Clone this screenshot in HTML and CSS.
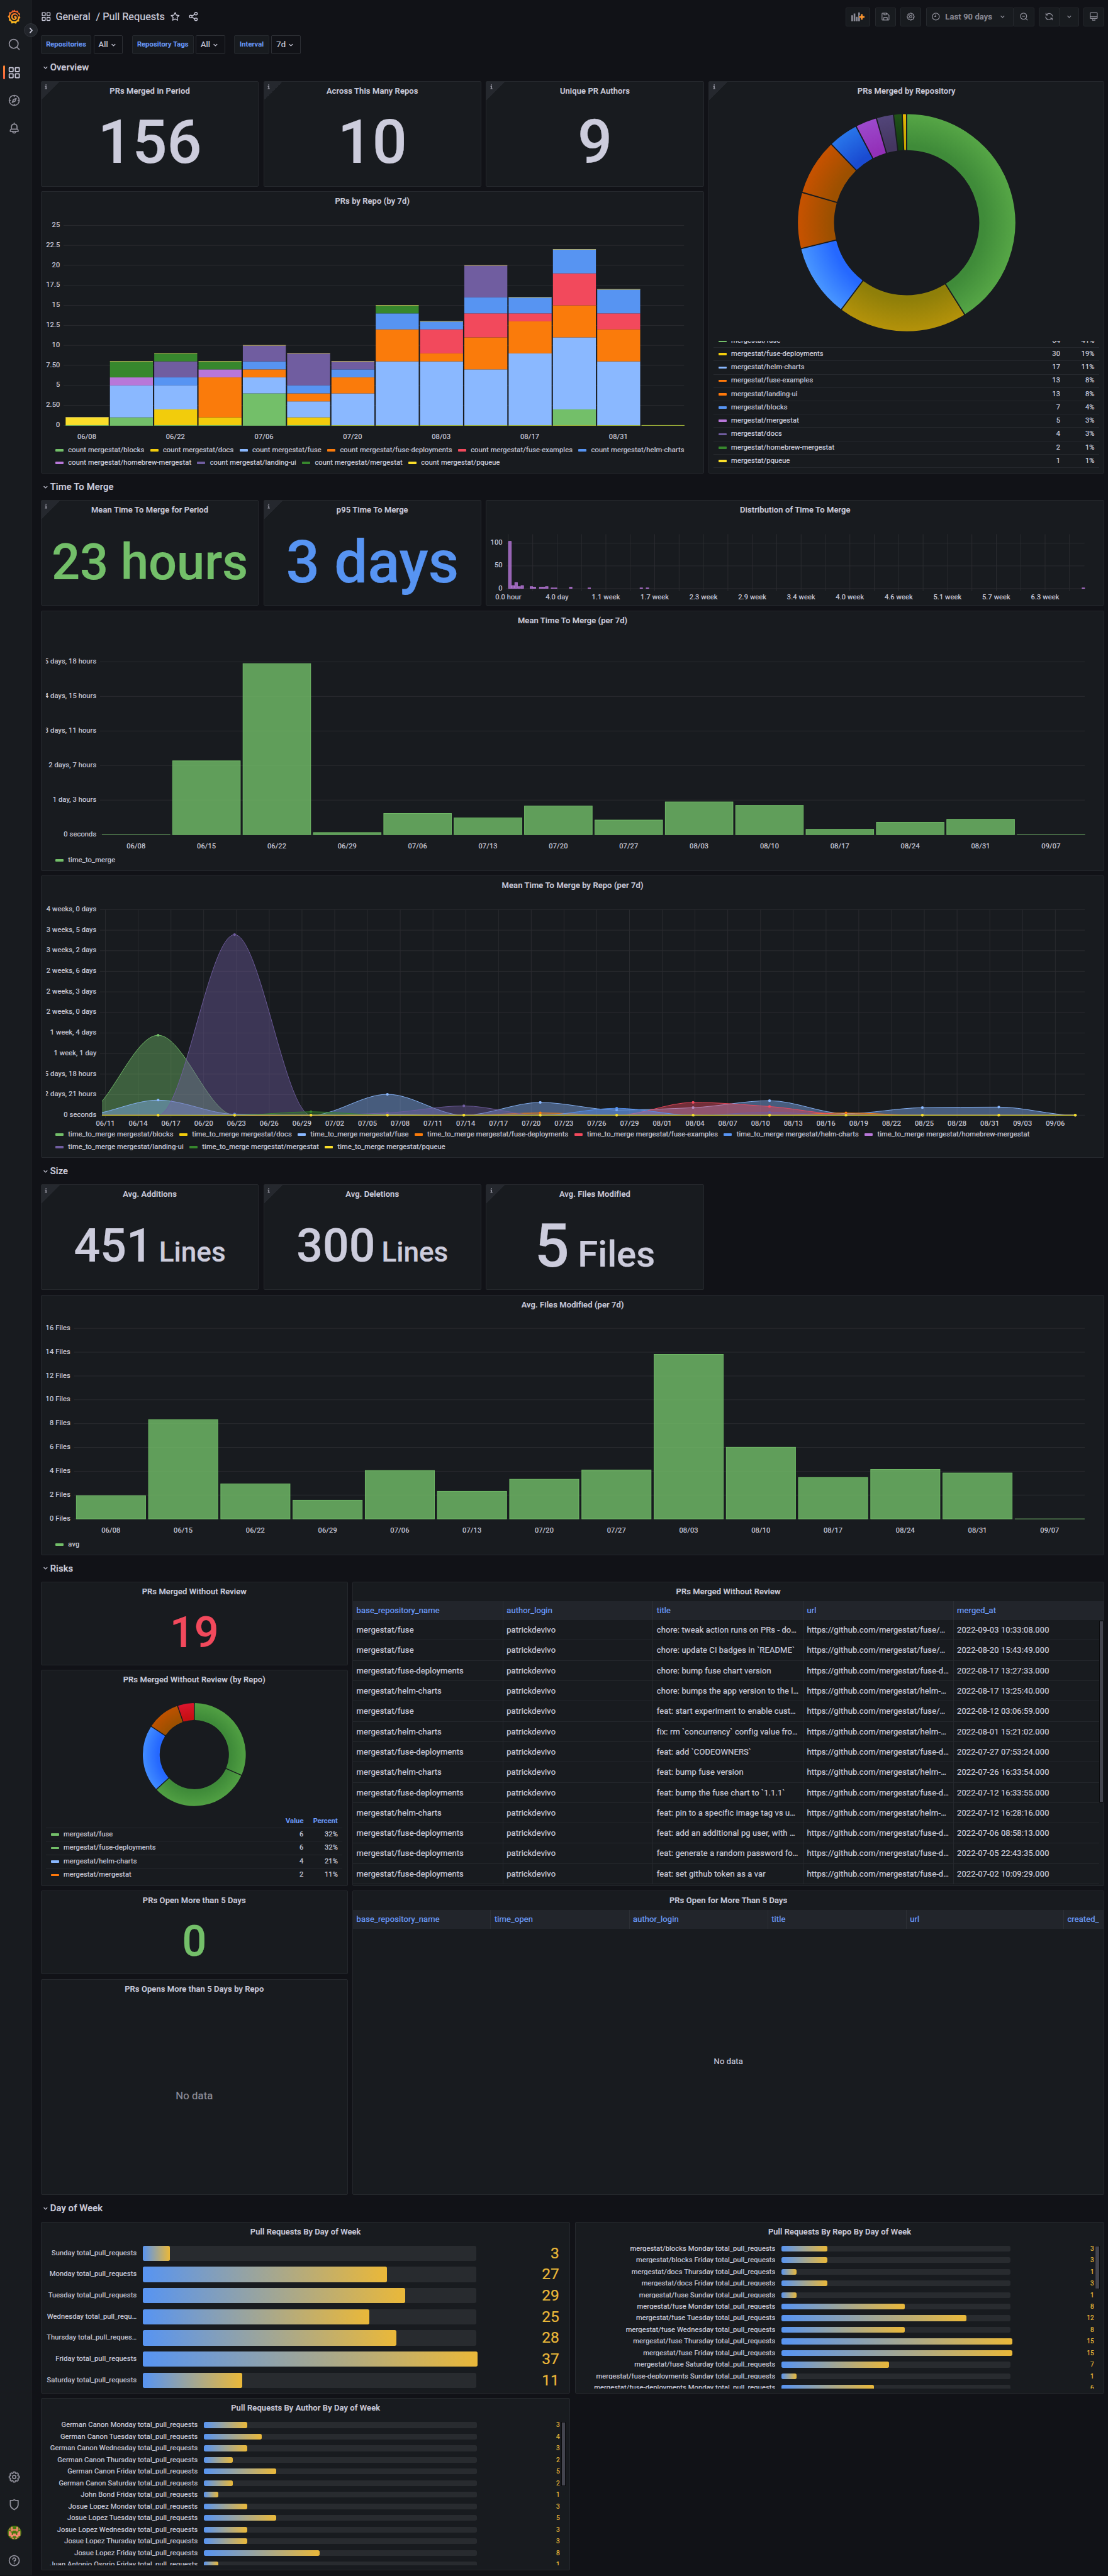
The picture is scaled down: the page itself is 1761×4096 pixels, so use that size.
FILE: index.html
```html
<!DOCTYPE html>
<html lang="en">
<head>
<meta charset="utf-8">
<title>Pull Requests - Grafana</title>
<link rel="stylesheet" href="styles.css">
</head>
<body>
<svg class="sprite" aria-hidden="true">
  <defs>
    <linearGradient id="logoGrad" x1="0" y1="0" x2="0" y2="1"><stop offset="0" stop-color="#f0522b"/><stop offset="1" stop-color="#fbc51d"/></linearGradient>
    <symbol id="i-apps" viewBox="0 0 24 24"><g fill="none" stroke="currentColor" stroke-width="2"><rect x="3" y="3" width="7" height="7" rx=".6"/><rect x="14" y="3" width="7" height="7" rx=".6"/><rect x="3" y="14" width="7" height="7" rx=".6"/><rect x="14" y="14" width="7" height="7" rx=".6"/></g></symbol>
    <symbol id="i-search" viewBox="0 0 24 24"><g fill="none" stroke="currentColor" stroke-width="2" stroke-linecap="round"><circle cx="11" cy="11" r="8"/><path d="M17 17l4 4"/></g></symbol>
    <symbol id="i-compass" viewBox="0 0 24 24"><path fill="currentColor" d="M12,2A10,10,0,1,0,22,12,10,10,0,0,0,12,2Zm1,17.93V19a1,1,0,0,0-2,0v.93A8,8,0,0,1,4.07,13H5a1,1,0,0,0,0-2H4.07A8,8,0,0,1,11,4.07V5a1,1,0,0,0,2,0V4.07A8,8,0,0,1,19.93,11H19a1,1,0,0,0,0,2h.93A8,8,0,0,1,13,19.93ZM15.14,7.55l-5,2.12a1,1,0,0,0-.52.52l-2.12,5a1,1,0,0,0,.21,1.1,1,1,0,0,0,.7.29.93.93,0,0,0,.4-.08l5-2.12a1,1,0,0,0,.52-.52l2.12-5a1,1,0,0,0-1.31-1.31Zm-2.49,5.1-2.28,1,1-2.28,2.28-1Z"/></symbol>
    <symbol id="i-bell" viewBox="0 0 24 24"><path fill="currentColor" d="M18,13.18V10a6,6,0,0,0-5-5.91V3a1,1,0,0,0-2,0V4.09A6,6,0,0,0,6,10v3.18A3,3,0,0,0,4,16v2a1,1,0,0,0,1,1H8.14a4,4,0,0,0,7.72,0H19a1,1,0,0,0,1-1V16A3,3,0,0,0,18,13.18ZM8,10a4,4,0,0,1,8,0v3H8Zm4,10a2,2,0,0,1-1.72-1h3.44A2,2,0,0,1,12,20Zm6-3H6V16a1,1,0,0,1,1-1H17a1,1,0,0,1,1,1Z"/></symbol>
    <symbol id="i-cog" viewBox="0 0 24 24"><path fill="currentColor" d="M21.32,9.55l-1.89-.63.89-1.78A1,1,0,0,0,20.13,6L18,3.87a1,1,0,0,0-1.15-.19l-1.78.89-.63-1.89A1,1,0,0,0,13.5,2h-3a1,1,0,0,0-.95.68L8.92,4.57,7.14,3.68A1,1,0,0,0,6,3.87L3.87,6a1,1,0,0,0-.19,1.15l.89,1.78-1.89.63A1,1,0,0,0,2,10.5v3a1,1,0,0,0,.68.95l1.89.63-.89,1.78A1,1,0,0,0,3.87,18L6,20.13a1,1,0,0,0,1.15.19l1.78-.89.63,1.89a1,1,0,0,0,.95.68h3a1,1,0,0,0,.95-.68l.63-1.89,1.78.89A1,1,0,0,0,18,20.13L20.13,18a1,1,0,0,0,.19-1.15l-.89-1.78,1.89-.63A1,1,0,0,0,22,13.5v-3A1,1,0,0,0,21.32,9.55ZM20,12.78l-1.2.4A2,2,0,0,0,17.64,16l.57,1.14-1.1,1.1L16,17.64a2,2,0,0,0-2.79,1.16l-.4,1.2H11.22l-.4-1.2A2,2,0,0,0,8,17.64l-1.14.57-1.1-1.1L6.36,16A2,2,0,0,0,5.2,13.18L4,12.78V11.22l1.2-.4A2,2,0,0,0,6.36,8L5.79,6.89l1.1-1.1L8,6.36A2,2,0,0,0,10.82,5.2l.4-1.2h1.56l.4,1.2A2,2,0,0,0,16,6.36l1.14-.57,1.1,1.1L17.64,8a2,2,0,0,0,1.16,2.79l1.2.4ZM12,8a4,4,0,1,0,4,4A4,4,0,0,0,12,8Zm0,6a2,2,0,1,1,2-2A2,2,0,0,1,12,14Z"/></symbol>
    <symbol id="i-shield" viewBox="0 0 24 24"><path fill="currentColor" d="M19.63,3.65a1,1,0,0,0-.84-.2,8,8,0,0,1-6.22-1.27,1,1,0,0,0-1.14,0A8,8,0,0,1,5.21,3.45a1,1,0,0,0-.84.2A1,1,0,0,0,4,4.43v7.45a9,9,0,0,0,3.77,7.33l3.65,2.6a1,1,0,0,0,1.16,0l3.65-2.6A9,9,0,0,0,20,11.88V4.43A1,1,0,0,0,19.63,3.65ZM18,11.88a7,7,0,0,1-2.93,5.7L12,19.77,8.93,17.58A7,7,0,0,1,6,11.88V5.58a10,10,0,0,0,6-1.39,10,10,0,0,0,6,1.39Z"/></symbol>
    <symbol id="i-help" viewBox="0 0 24 24"><g fill="none" stroke="currentColor" stroke-width="2" stroke-linecap="round"><circle cx="12" cy="12" r="9"/><path d="M9.4 9.6A2.6 2.6 0 1 1 12 12.2v1"/></g><circle cx="12" cy="16.5" r="1.2" fill="currentColor"/></symbol>
    <symbol id="i-star" viewBox="0 0 24 24"><path fill="none" stroke="currentColor" stroke-width="2" stroke-linejoin="round" d="M12 2.8l2.8 5.9 6.3.9-4.6 4.5 1.1 6.5-5.6-3.1-5.6 3.1 1.1-6.5L2.9 9.6l6.3-.9z"/></symbol>
    <symbol id="i-share" viewBox="0 0 24 24"><g fill="none" stroke="currentColor" stroke-width="2"><circle cx="18" cy="5.5" r="3"/><circle cx="6" cy="12" r="3"/><circle cx="18" cy="18.5" r="3"/><path d="M8.7 10.6l6.6-3.7M8.7 13.4l6.6 3.7"/></g></symbol>
    <symbol id="i-save" viewBox="0 0 24 24"><path fill="none" stroke="currentColor" stroke-width="2" stroke-linejoin="round" d="M3 5a2 2 0 0 1 2-2h10l6 6v10a2 2 0 0 1-2 2H5a2 2 0 0 1-2-2zM8 3v4.500h6V3M7.500 21v-6a1 1 0 0 1 1-1h7a1 1 0 0 1 1 1v6"/></symbol>
    <symbol id="i-clock" viewBox="0 0 24 24"><g fill="none" stroke="currentColor" stroke-width="2" stroke-linecap="round"><circle cx="12" cy="12" r="9"/><path d="M12 7v5H9"/></g></symbol>
    <symbol id="i-zoom-out" viewBox="0 0 24 24"><g fill="none" stroke="currentColor" stroke-width="2" stroke-linecap="round"><circle cx="11" cy="11" r="8"/><path d="M17 17l4 4M8 11h6"/></g></symbol>
    <symbol id="i-sync" viewBox="0 0 24 24"><path fill="none" stroke="currentColor" stroke-width="2" stroke-linecap="round" stroke-linejoin="round" d="M4 3.500V8h4.500M4.600 8A9 9 0 0 1 20.900 11M20 20.500V16h-4.500M19.400 16A9 9 0 0 1 3.100 13"/></symbol>
    <symbol id="i-monitor" viewBox="0 0 24 24"><path fill="none" stroke="currentColor" stroke-width="2" stroke-linejoin="round" d="M4.500 2h15A1.500 1.500 0 0 1 21 3.500v12a1.500 1.500 0 0 1-1.500 1.500h-15A1.500 1.500 0 0 1 3 15.500v-12A1.500 1.500 0 0 1 4.500 2zM3 12.500h18M9 17v2.500M15 17v2.500M8 21.500h8"/></symbol>
    <symbol id="i-down" viewBox="0 0 24 24"><path fill="none" stroke="currentColor" stroke-width="2" stroke-linecap="round" stroke-linejoin="round" d="M8 10.500l4 4 4-4"/></symbol>
    <symbol id="i-right" viewBox="0 0 24 24"><path fill="none" stroke="currentColor" stroke-width="3" stroke-linecap="round" stroke-linejoin="round" d="M9.500 6.500l5 5.500-5 5.500"/></symbol>
    <symbol id="i-info" viewBox="0 0 6 10"><path fill="currentColor" d="M1.800 0h2v2h-2zM.6 3.200h3.200v4.900h1.200v1.200H.6V8.100h1.200V4.400H.6z"/></symbol>
    <symbol id="i-logo" viewBox="0 0 22 24">
      <path fill="url(#logoGrad)" d="M11 .3l2.200 2.200 4-.7.700 3.400 3 2-1.300 2.900 1.700 3.600-2.400 2.200.3 3.900-3.600.8-1.700 3-3.400-1.200-3.900 1-1.200-3.300L1.900 18l.5-3.500L.3 11.600l2.300-2.700-.3-4.100 3.700-.4L8 1.200l2 .7z"/>
      <path fill="none" stroke="#181b1f" stroke-width="2" stroke-linecap="round" d="M18.300 10.800C17.400 6.900 14.400 5 11.200 5.200 7.300 5.500 4.600 8.600 4.900 12.600c.3 3.700 3.300 6.300 6.600 6 3-.2 5-2.600 4.700-5.300-.2-2.300-2-3.900-4-3.700-1.800.1-3 1.500-2.700 3.100.2 1.100 1 1.800 2 1.700"/>
    </symbol>
  </defs>
</svg>

<div class="app">
  <nav class="side">
    <svg class="logo"><use href="#i-logo"/></svg>
    <div class="side-top">
      <span class="side-item"><svg class="ic20"><use href="#i-search"/></svg></span>
      <span class="side-item active"><svg class="ic20"><use href="#i-apps"/></svg></span>
      <span class="side-item"><svg class="ic20"><use href="#i-compass"/></svg></span>
      <span class="side-item"><svg class="ic20"><use href="#i-bell"/></svg></span>
    </div>
    <div class="side-bottom">
      <span class="side-item"><svg class="ic20"><use href="#i-cog"/></svg></span>
      <span class="side-item"><svg class="ic20"><use href="#i-shield"/></svg></span>
      <span class="side-item"><svg class="avatar" viewBox="0 0 12 12"><path fill="#f58a70" d="M3 1h1.400v2h3.200V1H9v4H7.600V4.200H4.400V5H3zM1 4.600h1.600v1.200h1V8h1.200V6.800h2.400V8h1.200V5.800h1V4.600H11v4.200H9.400v1.400H7.400V9H4.600v1.200H2.600V8.800H1zM4 10.500h1.300v1H4zM6.700 10.500H8v1H6.700zM1.500 2.500h1v1h-1zM9.500 2.500h1v1h-1z"/></svg></span>
      <span class="side-item"><svg class="ic20"><use href="#i-help"/></svg></span>
    </div>
    <span class="side-toggle"><svg class="ic16"><use href="#i-right"/></svg></span>
  </nav>

  <main class="main">
    <header class="toolbar">
      <svg class="ic18"><use href="#i-apps"/></svg>
      <span class="crumb">General</span><span class="crumb crumb-page">/ Pull Requests</span>
      <svg class="ic18 t-star"><use href="#i-star"/></svg>
      <svg class="ic18 t-share"><use href="#i-share"/></svg>
      <div class="actions">
        <span class="btn btn-add"><svg class="add-panel" viewBox="0 0 26 18"><path fill="currentColor" d="M1 6h3v11H1zM5.200 3h3v14h-3zM9.400 9h3v8h-3zM13.600 5.500V1h3v4.500l-2 2v3h2V17h-3z"/><path fill="#ff9830" d="M18.500 4h3v3.500H25v3h-3.500V14h-3v-3.500H15v-3h3.500z"/></svg></span>
        <span class="btn"><svg class="ic16"><use href="#i-save"/></svg></span>
        <span class="btn"><svg class="ic16"><use href="#i-cog"/></svg></span>
        <span class="btn-group">
          <span class="btn btn-time"><svg class="ic16"><use href="#i-clock"/></svg><b>Last 90 days</b><svg class="ic16"><use href="#i-down"/></svg></span>
          <span class="btn"><svg class="ic16"><use href="#i-zoom-out"/></svg></span>
        </span>
        <span class="btn-group">
          <span class="btn"><svg class="ic16"><use href="#i-sync"/></svg></span>
          <span class="btn btn-drop"><svg class="ic16"><use href="#i-down"/></svg></span>
        </span>
        <span class="btn"><svg class="ic16"><use href="#i-monitor"/></svg></span>
      </div>
    </header>

    <div class="vars">
      <div class="var"><span class="var-label">Repositories</span><span class="var-value">All<svg class="ic16"><use href="#i-down"/></svg></span></div>
      <div class="var"><span class="var-label var-tags">Repository Tags</span><span class="var-value">All<svg class="ic16"><use href="#i-down"/></svg></span></div>
      <div class="var"><span class="var-label var-interval">Interval</span><span class="var-value">7d<svg class="ic16"><use href="#i-down"/></svg></span></div>
    </div>

    <div class="grid">
      <h2 class="row-title"><svg class="ic16"><use href="#i-down"/></svg>Overview</h2>
      <section class="panel w5 h5 info"><h3>PRs Merged in Period</h3><div class="stat s-xl">156</div></section>
      <section class="panel w5 h5 info"><h3>Across This Many Repos</h3><div class="stat s-xl">10</div></section>
      <section class="panel w5 h5 info"><h3>Unique PR Authors</h3><div class="stat s-xl">9</div></section>
      <section class="panel w9 h18 info"><h3>PRs Merged by Repository</h3><div class="pie" id="pie-repo"></div></section>
      <section class="panel w15 h13"><h3>PRs by Repo (by 7d)</h3><div class="chart" id="prs-by-repo"></div></section>

      <h2 class="row-title"><svg class="ic16"><use href="#i-down"/></svg>Time To Merge</h2>
      <section class="panel w5 h5 info"><h3>Mean Time To Merge for Period</h3><div class="stat s-l green">23 hours</div></section>
      <section class="panel w5 h5 info"><h3>p95 Time To Merge</h3><div class="stat s-days blue">3 days</div></section>
      <section class="panel w14 h5"><h3>Distribution of Time To Merge</h3><div class="chart" id="distribution"></div></section>
      <section class="panel w24 h12"><h3>Mean Time To Merge (per 7d)</h3><div class="chart" id="mean-ttm"></div></section>
      <section class="panel w24 h13"><h3>Mean Time To Merge by Repo (per 7d)</h3><div class="chart" id="ttm-by-repo"></div></section>

      <h2 class="row-title"><svg class="ic16"><use href="#i-down"/></svg>Size</h2>
      <section class="panel w5 h5 info"><h3>Avg. Additions</h3><div class="stat s-m"><span>451</span><small>Lines</small></div></section>
      <section class="panel w5 h5 info"><h3>Avg. Deletions</h3><div class="stat s-m"><span>300</span><small>Lines</small></div></section>
      <section class="panel w5 h5 info"><h3>Avg. Files Modified</h3><div class="stat s-xl"><span>5</span><small>Files</small></div></section>
      <section class="panel w24 h12"><h3>Avg. Files Modified (per 7d)</h3><div class="chart" id="avg-files"></div></section>

      <h2 class="row-title"><svg class="ic16"><use href="#i-down"/></svg>Risks</h2>
      <section class="panel w7 h4"><h3>PRs Merged Without Review</h3><div class="stat s-s red">19</div></section>
      <section class="panel w17 h14"><h3>PRs Merged Without Review</h3><div class="table" id="no-review"></div><i class="scroll scroll-table"></i></section>
      <section class="panel w7 h10"><h3>PRs Merged Without Review (by Repo)</h3><div class="pie" id="pie-review"></div></section>
      <section class="panel w7 h4"><h3>PRs Open More than 5 Days</h3><div class="stat s-s green">0</div></section>
      <section class="panel w17 h14"><h3>PRs Open for More Than 5 Days</h3>
        <div class="table"><div class="tr th open-cols"><span>base_repository_name</span><span>time_open</span><span>author_login</span><span>title</span><span>url</span><span>created_</span></div></div>
        <div class="empty">No data</div>
      </section>
      <section class="panel w7 h10"><h3>PRs Opens More than 5 Days by Repo</h3><div class="empty empty-lg">No data</div></section>

      <h2 class="row-title"><svg class="ic16"><use href="#i-down"/></svg>Day of Week</h2>
      <section class="panel w12 h8"><h3>Pull Requests By Day of Week</h3><div class="gauges gauges-lg" id="g-day"></div></section>
      <section class="panel w12 h8"><h3>Pull Requests By Repo By Day of Week</h3><div class="gauges gauges-repo" id="g-repo"></div><i class="scroll scroll-repo"></i></section>
      <section class="panel w12 h8"><h3>Pull Requests By Author By Day of Week</h3><div class="gauges gauges-author" id="g-author"></div><i class="scroll scroll-author"></i></section>
    </div>
  </main>
</div>
<script src="script.js"></script>
</body>
</html>
```
FILE: styles.css
```css
*, *::before, *::after { box-sizing: border-box; }
html { background: #111217; }
body {
  margin: 0;
  background: #111217;
  color: #ccccdc;
  font: 400 14px/22px Roboto, "Liberation Sans", sans-serif;
  letter-spacing: 0.01071em;
  -webkit-text-stroke: 0.25px;
  overflow-x: hidden;
}
h2, h3 { margin: 0; }
.sprite { position: absolute; width: 0; height: 0; }
.ic16, .ic18, .ic20 { display: block; flex: none; width: 16px; height: 16px; }
.ic18 { width: 18px; height: 18px; }
.ic20 { width: 23px; height: 23px; }

.app { display: flex; width: 1907px; height: 4435px; zoom: 0.92344; }

/* sidebar */
.side {
  position: relative;
  flex: none;
  display: flex;
  flex-direction: column;
  width: 54px;
  padding: 16px 0 2px;
  background: #181b1f;
  border-right: 1px solid #25272c;
}
.logo { width: 23px; height: 25px; margin-left: 13.500px; }
.side-top { margin-top: 12px; }
.side-bottom { margin-top: auto; }
.side-item {
  position: relative;
  display: flex;
  align-items: center;
  justify-content: center;
  width: 50px;
  height: 48px;
  color: #8e8e99;
}
.side-item.active { color: #ccccdc; }
.side-item.active::before {
  content: "";
  position: absolute;
  left: 5px;
  top: 12px;
  width: 4px;
  height: 24px;
  border-radius: 2px;
  background: linear-gradient(#ff8833, #f55f3e);
}
.avatar { width: 24px; height: 24px; border-radius: 50%; background: #477a0e; }
.side-toggle {
  position: absolute;
  z-index: 2;
  left: 41px;
  top: 40px;
  display: flex;
  align-items: center;
  justify-content: center;
  width: 24px;
  height: 24px;
  border-radius: 50%;
  background: #22252b;
  border: 1px solid #303339;
}

/* top bar */
.main { flex: 1; min-width: 0; padding: 13px 6.200px 10px 16.300px; }
.toolbar { display: flex; align-items: center; height: 32px; }
.crumb { margin-left: 7.500px; font-size: 17.600px; letter-spacing: 0; white-space: pre; }
.crumb-page { margin-left: 9.500px; }
.t-star { margin-left: 8.500px; }
.t-share { margin-left: 14px; }
.actions { display: flex; gap: 8px; margin-left: auto; color: #8e8e99; }
.btn {
  display: flex;
  align-items: center;
  justify-content: center;
  width: 36px;
  height: 32px;
  background: #181b1f;
  border: 1px solid #25282d;
  border-radius: 2px;
}
.btn-add { width: 42px; }
.add-panel { width: 25px; height: 17px; }
.btn-group { display: flex; }
.btn-group .btn + .btn { margin-left: -1px; }
.btn-time { width: 151px; justify-content: flex-start; padding: 0 8px; }
.btn-time b { margin: 0 10px 0 8px; font-weight: 500; }
.btn-group .btn-drop { width: 34px; }

.vars { display: flex; gap: 16px; margin-top: 16px; }
.var { display: flex; gap: 3.800px; }
.var-label, .var-value {
  display: flex;
  align-items: center;
  justify-content: center;
  height: 32px;
  border: 1px solid #25282d;
  border-radius: 2px;
}
.var-label { width: 87px; background: #181b1f; color: #6e9fff; font-size: 12px; font-weight: 500; }
.var-tags { width: 105.700px; }
.var-interval { width: 60px; }
.var-value { width: 50.400px; border-color: #2c2e34; }
.var-value svg { margin-left: 1px; }

/* dashboard grid */
.grid {
  display: grid;
  grid-template-columns: repeat(24, minmax(0, 1fr));
  grid-auto-rows: 30px;
  gap: 8.004px 8px;
  margin-top: 8.300px;
}
.row-title {
  grid-column: 1 / -1;
  display: flex;
  align-items: center;
  font-size: 16px;
  font-weight: 500;
}
.panel {
  position: relative;
  display: flex;
  flex-direction: column;
  min-height: 0;
  background: #181b1f;
  border: 1px solid #25282d;
  border-radius: 2px;
  overflow: hidden;
}
.panel h3 {
  flex: none;
  height: 32px;
  padding-top: 1px;
  line-height: 31px;
  font-size: 14px;
  font-weight: 500;
  text-align: center;
}
.w5 { grid-column: span 5; }
.w7 { grid-column: span 7; }
.w9 { grid-column: span 9; }
.w12 { grid-column: span 12; }
.w14 { grid-column: span 14; }
.w15 { grid-column: span 15; }
.w17 { grid-column: span 17; }
.w24 { grid-column: span 24; }
.h4 { grid-row: span 4; }
.h5 { grid-row: span 5; }
.h8 { grid-row: span 8; }
.h10 { grid-row: span 10; }
.h12 { grid-row: span 12; }
.h13 { grid-row: span 13; }
.h14 { grid-row: span 14; }
.h18 { grid-row: span 18; }
.corner {
  position: absolute;
  left: 0;
  top: 0;
  width: 32px;
  height: 32px;
  background: linear-gradient(135deg, #25282e 50%, transparent 50%);
  color: #9a9aa6;
}
.corner svg { display: block; width: 5px; height: 9px; margin: 5px 0 0 6px; }

.stat {
  flex: 1;
  display: flex;
  align-items: center;
  justify-content: center;
  padding-bottom: 1px;
  font-weight: 500;
  line-height: 1;
  letter-spacing: 0;
  white-space: nowrap;
}
.stat:has(small) { align-items: baseline; }
.stat small { font-size: 0.6em; margin-left: 0.23em; }
.s-xl { font-size: 105px; }
.s-days { font-size: 102px; }
.s-l { font-size: 86px; }
.s-m { font-size: 79.500px; }
.s-s { font-size: 74px; }
.s-m:has(small) { padding-top: 34px; }
.s-xl:has(small) { padding-top: 21px; }
.green { color: #73bf69; }
.blue { color: #5794f2; }
.red { color: #f2495c; }

/* charts */
.chart svg, .pie svg { display: block; width: 100%; }
.ax { fill: #ccccdc; stroke: #ccccdc; stroke-width: 0.25px; font-size: 12px; }
.gl { stroke: #2b2d31; stroke-width: 1; }
.legend { display: flex; flex-wrap: wrap; column-gap: 10px; padding: 0 24px; font-size: 12px; }
.legend span { display: flex; align-items: center; gap: 8px; height: 22px; white-space: nowrap; }
.swatch { flex: none; width: 14px; height: 4px; border-radius: 1px; }

.pie { flex: 1; display: flex; flex-direction: column; min-height: 0; }
.pie svg { flex: none; }
.pie-legend { display: flex; flex-direction: column; justify-content: flex-end; margin: 0 8px; overflow: hidden; font-size: 12px; }
.lr { flex: none; display: flex; align-items: center; height: 23px; padding: 0 8px; border-bottom: 1px solid #25282d; }
.lr .name { flex: 1; margin-left: 8px; }
.lr .pct { width: 59px; text-align: right; }
.lr.head { color: #6e9fff; font-weight: 500; }
#pie-repo .pie-legend { height: 219px; }
#pie-review .pie-legend { height: 115px; }
#pie-review .lr:last-child { border-bottom: 0; }

/* tables */
.tr { display: grid; grid-template-columns: repeat(4, 258.400px) 1fr; height: 35px; border-bottom: 1px solid #25282d; margin-right: 8px; }
.tr span { padding-left: 6px; line-height: 34px; border-right: 1px solid #25282d; white-space: nowrap; overflow: hidden; }
.tr span:last-child { border-right: 0; }
.tr.th { height: 33px; margin-right: 0; border-bottom: 0; background: #22252b; color: #6e9fff; }
.th span { line-height: 33px; border-right-color: #2c2f35; }
.tr.open-cols { grid-template-columns: 237.500px repeat(3, 238.400px) 270.800px 1fr; }
.scroll {
  position: absolute;
  width: 8px;
  background: #43444e;
  border: 1px solid #0b0c0e;
}
.scroll-table { right: 0; top: 66px; height: 313px; }
.scroll-repo { right: 7px; top: 40px; height: 75px; }
.scroll-author { right: 7px; top: 40px; height: 110px; }
.empty { flex: 1; display: flex; align-items: center; justify-content: center; }
.empty-lg { font-size: 18px; color: #8e8e99; }

/* bar gauges */
.gauges { display: flex; flex-direction: column; margin-top: 8px; padding-left: 8px; overflow: hidden; }
.g-row { flex: none; display: flex; align-items: center; }
.g-label { flex: none; text-align: right; font-size: 12px; white-space: nowrap; overflow: hidden; margin-right: 10px; }
.g-track { flex: none; height: 100%; border-radius: 3px; background: #282b2f; }
.g-fill { height: 100%; border-radius: 3px; background: linear-gradient(90deg, #5794f2, #eab839); }
.g-value { flex: 1; text-align: right; color: #eab839; letter-spacing: 0; }
.gauges-lg { gap: 10.100px; padding-right: 18px; }
.gauges-lg .g-row { height: 26.400px; }
.gauges-lg .g-label { width: 156px; margin-right: 10.500px; }
.gauges-lg .g-track { width: 574px; }
.gauges-lg .g-value { font-size: 26.500px; }
.gauges-repo, .gauges-author { gap: 10.004px; height: 246px; padding-right: 17px; }
.gauges-repo .g-row, .gauges-author .g-row { height: 10px; }
.gauges-repo .g-label, .gauges-author .g-label { height: 10px; line-height: 10px; }
.gauges-repo .g-value, .gauges-author .g-value { font-size: 11px; line-height: 10px; }
.gauges-repo .g-label { width: 336px; }
.gauges-repo .g-track { width: 395px; }
.gauges-author .g-label { width: 261px; }
.gauges-author .g-track { width: 470px; }
```
FILE: script.js
```js
const $ = id => document.getElementById(id);
const C = {
  blocks: '#73BF69', docs: '#F2CC0C', fuse: '#8AB8FF', 'fuse-deployments': '#FA7B0B', 'fuse-examples': '#F2495C',
  'helm-charts': '#5794F2', 'homebrew-mergestat': '#B877D9', 'landing-ui': '#705DA0', mergestat: '#37872D', pqueue: '#FADE2A'
};
const REPOS = Object.keys(C);
const GREEN = '#73BF69';

const line = (x1, y1, x2, y2) => `<line class="gl" x1="${x1}" y1="${y1}" x2="${x2}" y2="${y2}"/>`;
const text = (x, y, s, anchor = 'middle') => `<text class="ax" x="${x}" y="${y + 4.3}" text-anchor="${anchor}">${s}</text>`;
const rect = (x, y, w, h, extra) => `<rect x="${x}" y="${y}" width="${w}" height="${h}" ${extra}/>`;
const legend = items => `<div class="legend">${items.map(([n, c]) => `<span><i class="swatch" style="background:${c}"></i>${n}</span>`).join('')}</div>`;
const svg = (w, h, body) => `<svg viewBox="1 33 ${w - 2} ${h}" height="${h}">${body}</svg>`;

// horizontal grid with labels to the left of the plot
function yGrid(labels, top, bottom, left, right) {
  const step = (bottom - top) / (labels.length - 1);
  return labels.map((l, i) => line(left, top + i * step, right, top + i * step) + text(left - 6, top + i * step - 1.4, l, 'end')).join('');
}

document.querySelectorAll('.panel.info').forEach(p =>
  p.insertAdjacentHTML('beforeend', '<i class="corner"><svg><use href="#i-info"/></svg></i>'));

// PRs by repo, stacked bars
(() => {
  const stacks = [
    { pqueue: 1 }, { blocks: 1, fuse: 4, 'homebrew-mergestat': 1, mergestat: 2 },
    { docs: 2, fuse: 3, 'helm-charts': 1, 'landing-ui': 2, mergestat: 1 },
    { docs: 1, 'fuse-deployments': 5, 'homebrew-mergestat': 1, mergestat: 1 },
    { blocks: 4, fuse: 2, 'fuse-deployments': 1, 'helm-charts': 1, 'landing-ui': 2 },
    { docs: 1, fuse: 2, 'fuse-deployments': 1, 'helm-charts': 1, 'landing-ui': 4 },
    { fuse: 4, 'fuse-deployments': 2, 'helm-charts': 1, 'landing-ui': 1 },
    { fuse: 8, 'fuse-deployments': 4, 'helm-charts': 2, mergestat: 1 },
    { fuse: 8, 'fuse-deployments': 1, 'fuse-examples': 3, 'helm-charts': 1 },
    { fuse: 7, 'fuse-deployments': 4, 'fuse-examples': 3, 'helm-charts': 2, 'landing-ui': 4 },
    { fuse: 9, 'fuse-deployments': 4, 'fuse-examples': 1, 'helm-charts': 2 },
    { blocks: 2, fuse: 9, 'fuse-deployments': 4, 'fuse-examples': 4, 'helm-charts': 3 },
    { fuse: 8, 'fuse-deployments': 4, 'fuse-examples': 2, 'helm-charts': 3 }, {}
  ];
  const top = 58.3, bottom = 402.7, unit = (bottom - top) / 25;
  let s = yGrid(['25', '22.5', '20', '17.5', '15', '12.5', '10', '7.50', '5', '2.50', '0'], top, bottom, 38.8, 1107);
  stacks.forEach((st, i) => {
    const x = 42.5 + i * 76.25;
    let n = 0;
    for (const r of REPOS) if (st[r]) {
      n += st[r];
      s += rect(x, bottom - n * unit, 74, st[r] * unit, `fill="${C[r]}"`);
    }
    if (n) s += rect(x, bottom - n * unit - .5, 74, 1, 'fill="#c3b45a"');
    s += rect(x, bottom - .5, 74, 1, `fill="${i < 6 ? '#73BF69' : '#b5cc3c'}"`);
  });
  ['06/08', '06/22', '07/06', '07/20', '08/03', '08/17', '08/31'].forEach((d, i) => { s += text(79 + i * 152.5, 421.9, d); });
  $('prs-by-repo').innerHTML = svg(1141, 402, s) + legend(REPOS.map(r => ['count mergestat/' + r, C[r]]));
})();

// distribution histogram
(() => {
  let s = '';
  for (let k = 0; k < 24; k++) s += line(38.8 + 42 * k, 58.3, 38.8 + 42 * k, 156.5);
  s += yGrid(['100', '50', '0'], 73.9, 152, 34.8, 1030.6);
  ['0.0 hour', '4.0 day', '1.1 week', '1.7 week', '2.3 week', '2.9 week', '3.4 week', '4.0 week', '4.6 week', '5.1 week', '5.7 week', '6.3 week']
    .forEach((l, i) => { s += text(38.8 + 84 * i, 165.9, l); });
  [[38.8, 81], [44.2, 4.8], [49.5, 10], [54.8, 3], [60.1, 4.8], [75.8, 3], [81, 2.2], [91.8, 2], [97, 2], [102.3, 3], [112, .8], [117.6, .8],
    [143.6, 2], [175.4, .8], [265, .8], [275.6, .8], [1026, .8]].forEach(([x, h]) => {
    s += rect(x + .5, 151.7 - h, 4.4, h, 'fill="#B877D9" fill-opacity=".8" stroke="#B877D9" stroke-width="1"');
  });
  $('distribution').innerHTML = svg(1064.5, 146, s);
})();

function weeklyBars(id, cfg) {
  const dates = ['06/08', '06/15', '06/22', '06/29', '07/06', '07/13', '07/20', '07/27', '08/03', '08/10', '08/17', '08/24', '08/31', '09/07'];
  let s = `<clipPath id="${id}-clip"><rect x="8.5" y="0" width="1900" height="500"/></clipPath>`;
  s += `<g clip-path="url(#${id}-clip)">` + yGrid(cfg.labels, cfg.top, 386.2, cfg.left, 1796.6) + '</g>';
  cfg.tops.forEach((y, i) => {
    const x = cfg.x0 + i * cfg.pitch, h = 386.2 - y;
    s += h > 0
      ? rect(x + .5, y + .5, cfg.w - 1, h - .5, `fill="${GREEN}" fill-opacity=".8" stroke="${GREEN}" stroke-width="1"`)
      : rect(x, 385.7, cfg.w, 1, `fill="${GREEN}"`);
    s += text(x + cfg.w / 2, 405.9, dates[i]);
  });
  $(id).innerHTML = svg(1830.5, 386, s) + legend([[cfg.name, GREEN]]);
}
weeklyBars('mean-ttm', {
  labels: ['5 days, 18 hours', '4 days, 15 hours', '3 days, 11 hours', '2 days, 7 hours', '1 day, 3 hours', '0 seconds'],
  top: 88.6, left: 101.6, x0: 105, pitch: 121.14, w: 117.5, name: 'time_to_merge',
  tops: [386.2, 258.6, 91.2, 382.2, 349.3, 356.7, 336.3, 360.6, 329.3, 335.4, 376.6, 364.5, 359.3, 386.2]
});
weeklyBars('avg-files', {
  labels: [16, 14, 12, 10, 8, 6, 4, 2, 0].map(n => n + ' Files'),
  top: 58.1, left: 56.8, x0: 60.4, pitch: 124.3, w: 120.2, name: 'avg',
  tops: [345.6, 214.7, 325.3, 353.5, 302.3, 338.3, 317.5, 301.4, 102.3, 262.4, 314.4, 300.5, 306.6, 386.2]
});

// mean time to merge by repo, smoothed areas
(() => {
  const base = 412.3, x = i => 201.7 + 131.55 * i;
  const vals = { // height above the baseline per weekly point
    blocks: { 0: 137.7, 3: 2 }, docs: {},
    fuse: { 0: 26, 1: 1.5, 3: 36, 5: 22, 6: 9, 7: 13, 8: 25, 9: 2.7, 10: 13, 11: 14 },
    'fuse-deployments': { 5: 4, 9: 4 }, 'fuse-examples': { 7: 22, 8: 15, 9: 1 },
    'helm-charts': { 1: 2, 6: 12 }, 'homebrew-mergestat': {},
    'landing-ui': { 1: 311, 3: 4, 4: 16, 8: 5 }, mergestat: { 2: 6 }, pqueue: {}
  };
  let s = '<clipPath id="repo-clip"><rect x="105" y="50" width="1700" height="370"/></clipPath><clipPath id="repo-y"><rect x="8.5" y="0" width="1900" height="500"/></clipPath>';
  for (let k = 0; k < 30; k++) s += line((111 + 56.38 * k).toFixed(1), 58.3, (111 + 56.38 * k).toFixed(1), 417);
  s += '<g clip-path="url(#repo-y)">' + yGrid(['4 weeks, 0 days', '3 weeks, 5 days', '3 weeks, 2 days', '2 weeks, 6 days', '2 weeks, 3 days', '2 weeks, 0 days', '1 week, 4 days', '1 week, 1 day', '5 days, 18 hours', '2 days, 21 hours', '0 seconds'], 58.3, base, 101.6, 1796.6) + '</g>';
  for (let k = 0; k < 30; k++) {
    const d = new Date(2022, 5, 11 + 3 * k), p = n => String(n).padStart(2, '0');
    s += text(111 + 56.38 * k, 425.7, p(d.getMonth() + 1) + '/' + p(d.getDate()));
  }
  for (const r of REPOS) {
    const pts = [];
    for (let i = -1; i <= 12; i++) pts.push([x(i), base - (vals[r][i] || 0)]);
    const m = pts.map((p, i) => {
      if (!i || i === pts.length - 1) return 0;
      const a = p[1] - pts[i - 1][1], b = pts[i + 1][1] - p[1];
      return a * b <= 0 ? 0 : 2 * a * b / (a + b) / 131.55;
    });
    let d = `M${pts[0]}`;
    for (let i = 1; i < pts.length; i++) {
      const k = 131.55 / 3;
      d += `C${pts[i - 1][0] + k},${pts[i - 1][1] + m[i - 1] * k} ${pts[i][0] - k},${pts[i][1] - m[i] * k} ${pts[i]}`;
    }
    s += `<g clip-path="url(#repo-clip)"><path d="${d}V${base}H${pts[0][0]}Z" fill="${C[r]}" fill-opacity=".42"/><path d="${d}" fill="none" stroke="${C[r]}" stroke-width="1"/></g>`;
    pts.slice(1).forEach(p => { s += `<circle cx="${p[0]}" cy="${p[1]}" r="2.3" fill="${C[r]}"/>`; });
  }
  $('ttm-by-repo').innerHTML = svg(1830.5, 402, s) + legend(REPOS.map(r => ['time_to_merge mergestat/' + r, C[r]]));
})();

function donut(id, cfg) {
  const total = cfg.rows.reduce((a, r) => a + r.v, 0);
  const { cx, cy, R, r } = cfg, d = cfg.inset;
  let a = 0, s = '';
  cfg.rows.forEach((row, i) => {
    const b = a + row.v / total * 2 * Math.PI;
    const pt = (ang, rad) => `${(cx + rad * Math.sin(ang)).toFixed(2)},${(cy - rad * Math.cos(ang)).toFixed(2)}`;
    const Ro = R - 1, ri = r + 1, o = Math.asin(d / Ro), n = Math.asin(d / ri), big = b - a > Math.PI ? 1 : 0;
    s += `<radialGradient id="${id}-${i}" gradientUnits="userSpaceOnUse" cx="${cx}" cy="${cy}" r="${cfg.gr}"><stop offset="${r * 1.06 / cfg.gr}" stop-color="${row.g[0]}"/><stop offset="1" stop-color="${row.g[1]}"/></radialGradient>`;
    s += `<path fill="url(#${id}-${i})" stroke="url(#${id}-${i})" stroke-width="2" stroke-linejoin="round" d="M${pt(a + o, Ro)}A${Ro},${Ro} 0 ${big} 1 ${pt(b - o, Ro)}L${pt(b - n, ri)}A${ri},${ri} 0 ${big} 0 ${pt(a + n, ri)}Z"/>`;
    a = b;
  });
  const head = cfg.head ? '<div class="lr head"><span class="name"></span><span>Value</span><span class="pct">Percent</span></div>' : '';
  const rows = cfg.rows.filter(row => row.name).map(row =>
    `<div class="lr"><i class="swatch" style="background:${row.c}"></i><span class="name">mergestat/${row.name}</span><span>${row.v}</span><span class="pct">${row.p}%</span></div>`).join('');
  $(id).innerHTML = svg(cfg.w, cfg.h, s) + `<div class="pie-legend">${head}${rows}</div>`;
}
const G = {
  green: ['#3f8b39', '#56a646'], gold: ['#8f7f09', '#b4920a'], blue: ['#2568ff', '#4996ff'], orange: ['#9d5000', '#c75200'],
  deep: ['#1a4bd1', '#2875ea'], purple: ['#9330b8', '#9c49cc'], plum: ['#44365f', '#52457a'], forest: ['#133a12', '#205318'],
  yellow: ['#c6a800', '#e3b505'], red: ['#c70f12', '#e01736']
};
donut('pie-repo', {
  w: 681.4, h: 414.5, cx: 341, cy: 244.2, R: 187, r: 125, gr: 187, inset: 2, rows: [
    { name: 'fuse', v: 64, p: 41, c: '#73BF69', g: G.green }, { name: 'fuse-deployments', v: 30, p: 19, c: '#F2CC0C', g: G.gold },
    { name: 'helm-charts', v: 17, p: 11, c: '#8AB8FF', g: G.blue }, { name: 'fuse-examples', v: 13, p: 8, c: '#FF780A', g: G.orange },
    { name: 'landing-ui', v: 13, p: 8, c: '#FF780A', g: G.orange }, { name: 'blocks', v: 7, p: 4, c: '#5794F2', g: G.deep },
    { name: 'mergestat', v: 5, p: 3, c: '#B877D9', g: G.purple }, { name: 'docs', v: 4, p: 3, c: '#705DA0', g: G.plum },
    { name: 'homebrew-mergestat', v: 2, p: 1, c: '#37872D', g: G.forest }, { name: 'pqueue', v: 1, p: 1, c: '#FADE2A', g: G.yellow }
  ]
});
donut('pie-review', {
  w: 528.2, h: 216.5, cx: 264, cy: 145.5, R: 88.6, r: 59.6, gr: 96, inset: 1.8, head: true, rows: [
    { name: 'fuse', v: 6, p: 32, c: '#73BF69', g: G.green }, { name: 'fuse-deployments', v: 6, p: 32, c: '#73BF69', g: G.green },
    { name: 'helm-charts', v: 4, p: 21, c: '#8AB8FF', g: G.blue }, { name: 'mergestat', v: 2, p: 11, c: '#FF780A', g: G.orange },
    { v: 1, g: G.red }
  ]
});

// PRs merged without review
(() => {
  const F = 'fuse', D = 'fuse-deployments', H = 'helm-charts';
  const url = { [F]: 'fuse/…', [D]: 'fuse-d…', [H]: 'helm-…' };
  const rows = [
    [F, 'chore: tweak action runs on PRs - do…', '2022-09-03 10:33:08.000'], [F, 'chore: update CI badges in `README`', '2022-08-20 15:43:49.000'],
    [D, 'chore: bump fuse chart version', '2022-08-17 13:27:33.000'], [H, 'chore: bumps the app version to the l…', '2022-08-17 13:25:40.000'],
    [F, 'feat: start experiment to enable cust…', '2022-08-12 03:06:59.000'], [H, 'fix: rm `concurrency` config value fro…', '2022-08-01 15:21:02.000'],
    [D, 'feat: add `CODEOWNERS`', '2022-07-27 07:53:24.000'], [H, 'feat: bump fuse version', '2022-07-26 16:33:54.000'],
    [D, 'feat: bump the fuse chart to `1.1.1`', '2022-07-12 16:33:55.000'], [H, 'feat: pin to a specific image tag vs u…', '2022-07-12 16:28:16.000'],
    [D, 'feat: add an additional pg user, with …', '2022-07-06 08:58:13.000'], [D, 'feat: generate a random password fo…', '2022-07-05 22:43:35.000'],
    [D, 'feat: set github token as a var', '2022-07-02 10:09:29.000']
  ];
  const tr = (cells, cls = '') => `<div class="tr ${cls}">${cells.map(c => `<span>${c}</span>`).join('')}</div>`;
  $('no-review').innerHTML = tr(['base_repository_name', 'author_login', 'title', 'url', 'merged_at'], 'th') +
    rows.map(([r, t, d]) => tr(['mergestat/' + r, 'patrickdevivo', t, 'https://github.com/mergestat/' + url[r], d])).join('');
})();

function gauges(id, rows, max, over) {
  $(id).innerHTML = rows.map(([l, v]) =>
    `<div class="g-row"><span class="g-label">${l}</span><div class="g-track"><div class="g-fill" style="width:${(v / max * over).toFixed(2)}%"></div></div><span class="g-value">${v}</span></div>`).join('');
}
const T = ' total_pull_requests';
gauges('g-day', [['Sunday' + T, 3], ['Monday' + T, 27], ['Tuesday' + T, 29], ['Wednesday total_pull_requ…', 25],
  ['Thursday total_pull_reques…', 28], ['Friday' + T, 37], ['Saturday' + T, 11]], 37, 100.4);
gauges('g-repo', [['blocks Monday', 3], ['blocks Friday', 3], ['docs Thursday', 1], ['docs Friday', 3], ['fuse Sunday', 1], ['fuse Monday', 8],
  ['fuse Tuesday', 12], ['fuse Wednesday', 8], ['fuse Thursday', 15], ['fuse Friday', 15], ['fuse Saturday', 7],
  ['fuse-deployments Sunday', 1], ['fuse-deployments Monday', 6]].map(([n, v]) => ['mergestat/' + n + T, v]), 15, 100.75);
gauges('g-author', [['German Canon Monday', 3], ['German Canon Tuesday', 4], ['German Canon Wednesday', 3], ['German Canon Thursday', 2],
  ['German Canon Friday', 5], ['German Canon Saturday', 2], ['John Bond Friday', 1], ['Josue Lopez Monday', 3], ['Josue Lopez Tuesday', 5],
  ['Josue Lopez Wednesday', 3], ['Josue Lopez Thursday', 3], ['Josue Lopez Friday', 8], ['Juan Antonio Osorio Friday', 1]]
  .map(([n, v]) => [n + T, v]), 19, 100.75);
```
